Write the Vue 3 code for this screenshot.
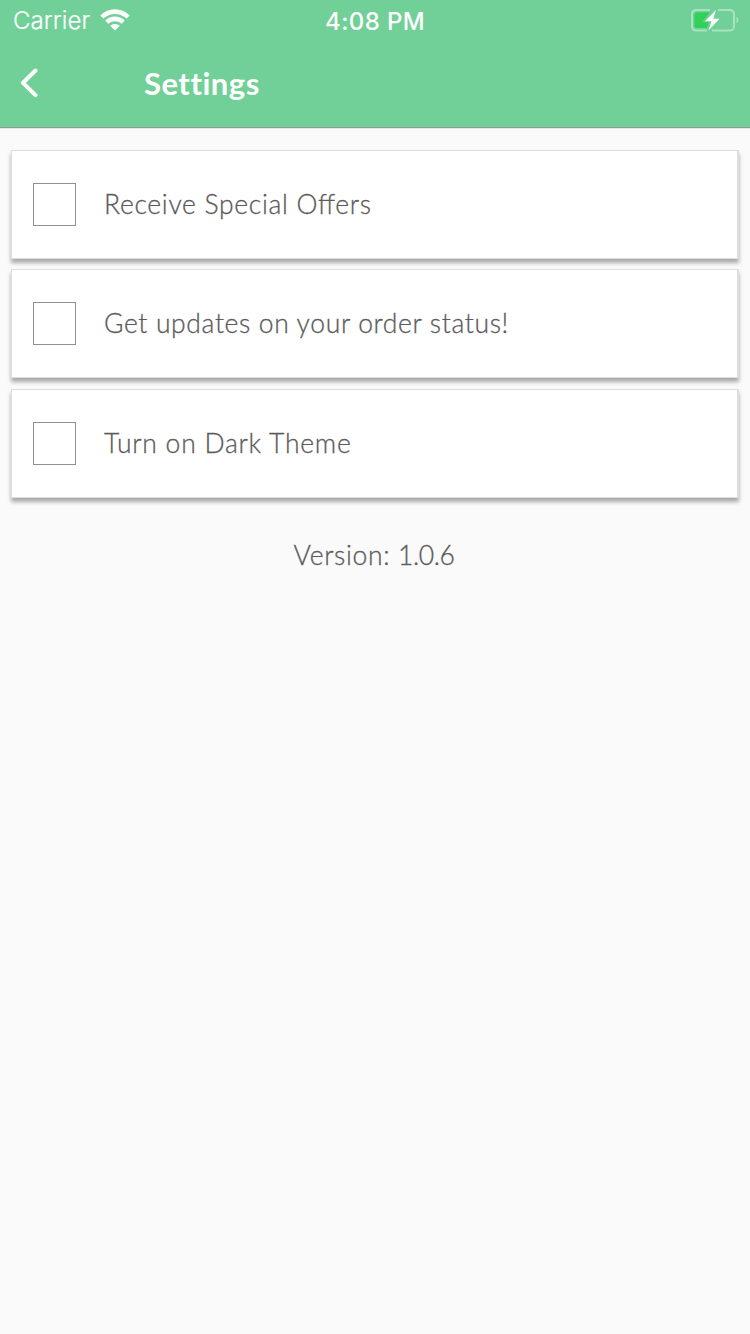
<script setup>
import { ref } from 'vue'

const options = ref([
  { id: 'offers', label: 'Receive Special Offers', checked: false },
  { id: 'updates', label: 'Get updates on your order status!', checked: false },
  { id: 'theme', label: 'Turn on Dark Theme', checked: false },
])
</script>

<template>
  <main class="screen">
    <header class="header">
      <div class="status">
        <div class="carrier">
          <span class="carrier-name">Carrier</span>
          <svg class="wifi" width="30" height="22" viewBox="0 0 30 22">
            <path d="M.3 6.4C8.6-1.8 21.4-1.8 29.7 6.4L26.7 9.6C20.2 3.3 9.8 3.3 3.3 9.6Z" />
            <path d="M5.2 11.5C10.8 6.1 19.2 6.1 24.8 11.5L21.7 14.7C18 11.4 12 11.4 8.3 14.7Z" />
            <path d="M10.2 16.7C13 14.4 17 14.4 19.8 16.7L15 21.6Z" />
          </svg>
        </div>
        <time class="clock">4:08 PM</time>
        <svg class="battery" width="50" height="26" viewBox="0 0 50 26">
          <path class="shell" d="M21 3H7.5Q3 3 3 7.5V19Q3 23.5 7.5 23.5H18M29 3H40.5Q45 3 45 7.5V19Q45 23.5 40.5 23.5H23" />
          <path class="tip" d="M47.5 9.5Q49.5 10.5 49.5 13T47.5 16.5Z" />
          <path class="charge" d="M7.5 5.5H21L13.5 15H20L18 21H7.5Q5.5 21 5.5 19V7.5Q5.5 5.5 7.5 5.5Z" />
          <path class="bolt" d="M27 3L16 14.3H22.5L19.5 23.5L30.5 11.7H24.2Z" />
        </svg>
      </div>
      <div class="bar">
        <svg class="back" width="18" height="30" viewBox="0 0 18 30">
          <path d="M15.5 2.5L3 14.8L15.5 27.2" />
        </svg>
        <h1 class="title">Settings</h1>
      </div>
    </header>

    <section class="list">
      <label v-for="option in options" :key="option.id" class="card">
        <input v-model="option.checked" class="box" type="checkbox">
        <span class="label" :class="option.id">{{ option.label }}</span>
      </label>
    </section>

    <p class="version">Version: <span class="number">1.0.6</span></p>
  </main>
</template>

<style>
body {
  margin: 0;
  background: #fafafa;
}
</style>

<style scoped>
.screen {
  box-sizing: border-box;
  width: 750px;
  height: 1334px;
  overflow: hidden;
  background: #fafafa;
  color: #5b5b5b;
  font-family: Lato, "Open Sans", sans-serif;
}
.header {
  box-sizing: border-box;
  height: 128px;
  background: #71d097;
  border-bottom: 1px solid #8c9a92;
  box-shadow: 0 1px 0 #e4e4e4;
  color: #fff;
}
.status {
  display: grid;
  grid-template-columns: 1fr auto 1fr;
  align-items: center;
  height: 40px;
  padding: 0 11px 0 13px;
  font-family: Inter, sans-serif;
}
.carrier {
  display: flex;
  align-items: center;
  gap: 9px;
}
.carrier-name {
  width: 78px;
  padding-top: 1px;
  font-size: 24px;
  font-weight: 300;
  letter-spacing: .1px;
  white-space: nowrap;
  -webkit-text-stroke: .2px currentColor;
}
.wifi {
  fill: #fff;
}
.clock {
  padding: 2px 2px 0 0;
  font-size: 24px;
  font-weight: 500;
  letter-spacing: .35px;
}
.battery {
  justify-self: end;
  margin-bottom: 1px;
}
.shell {
  fill: none;
  stroke: #a9e2c0;
  stroke-width: 2;
}
.tip {
  fill: #a9e2c0;
}
.charge {
  fill: #30d158;
}
.bolt {
  fill: #fff;
}
.bar {
  display: flex;
  align-items: center;
  height: 85px;
  padding-left: 20px;
}
.back {
  fill: none;
  stroke: #fff;
  stroke-width: 4;
  stroke-linecap: round;
  stroke-linejoin: round;
}
.title {
  margin: 0 0 0 106px;
  font-size: 31px;
  font-weight: 700;
  line-height: 40px;
  letter-spacing: .5px;
}
.list {
  display: grid;
  gap: 10.4px;
  padding: 22px 11px 0;
}
.card {
  display: flex;
  align-items: center;
  box-sizing: border-box;
  height: 109px;
  padding-left: 21px;
  background: #fff;
  border: 1px solid #dedede;
  border-right-width: 2px;
  box-shadow: 0 4px 4px rgba(0, 0, 0, .32);
}
.box {
  appearance: none;
  box-sizing: border-box;
  width: 43px;
  height: 43px;
  margin: 0 28px 0 0;
  background: #fff;
  border: 1px solid #8f8f8f;
}
.label,
.version {
  font-size: 26.5px;
  font-weight: 300;
  line-height: 36px;
  -webkit-text-stroke: .3px currentColor;
}
.label {
  padding-bottom: 1px;
  letter-spacing: .64px;
}
.offers {
  font-feature-settings: "liga" 1;
  letter-spacing: .68px;
}
.theme {
  letter-spacing: .74px;
}
.version {
  margin: 39px 2px 0 0;
  letter-spacing: .65px;
  text-align: center;
}
.number {
  letter-spacing: -.4px;
}
</style>
